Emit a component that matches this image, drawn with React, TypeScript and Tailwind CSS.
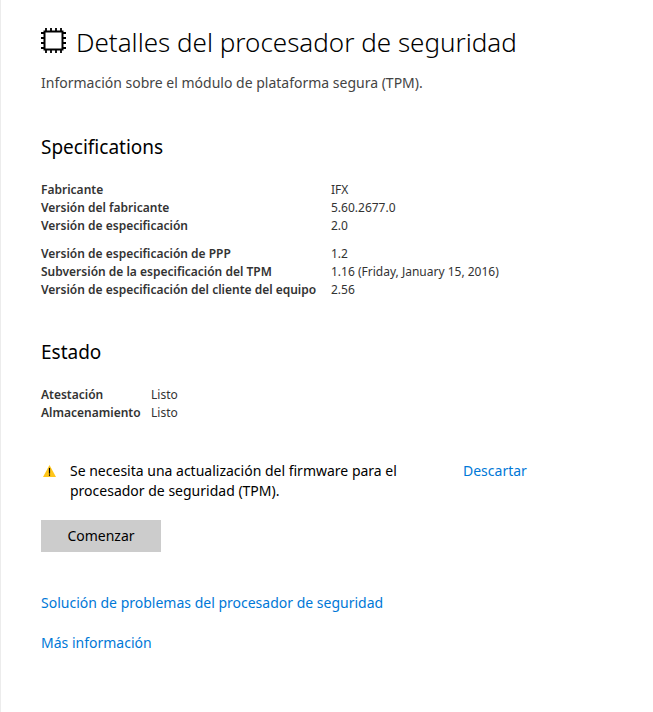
type Row = { label: string; value: string }

const manufacturerRows: Row[] = [
  { label: 'Fabricante', value: 'IFX' },
  { label: 'Versión del fabricante', value: '5.60.2677.0' },
  { label: 'Versión de especificación', value: '2.0' },
]

const specificationRows: Row[] = [
  { label: 'Versión de especificación de PPP', value: '1.2' },
  { label: 'Subversión de la especificación del TPM', value: '1.16 (Friday, January 15, 2016)' },
  { label: 'Versión de especificación del cliente del equipo', value: '2.56' },
]

const statusRows: Row[] = [
  { label: 'Atestación', value: 'Listo' },
  { label: 'Almacenamiento', value: 'Listo' },
]

function ChipIcon() {
  return (
    <svg className="mb-[3px] size-[25px] shrink-0" viewBox="0 0 25 25" fill="none" stroke="#000" aria-hidden="true">
      <rect x="3.5" y="3.5" width="18" height="18" strokeWidth="2" />
      <path
        d="M5 0v3M10 0v3M15 0v3M20 0v3M5 22v3M10 22v3M15 22v3M20 22v3M0 5h3M0 10h3M0 15h3M0 20h3M22 5h3M22 10h3M22 15h3M22 20h3"
        strokeWidth="1.8"
      />
    </svg>
  )
}

function WarningIcon() {
  return (
    <svg className="mt-1 h-3 w-[13px] shrink-0" viewBox="0 0 13 12" aria-hidden="true">
      <path d="M6.5 0L13 12H0z" fill="#ffc61a" />
      <path d="M6 3h1v5.5H6zM6 9.5h1v1.2H6z" fill="#000" stroke="#000" strokeWidth="0.2" />
    </svg>
  )
}

function Rows({ rows }: { rows: Row[] }) {
  return (
    <tbody>
      {rows.map((row) => (
        <tr key={row.label}>
          <th scope="row" className="p-0 text-left font-semibold">{row.label}</th>
          <td className="p-0">{row.value}</td>
        </tr>
      ))}
    </tbody>
  )
}

export default function App() {
  return (
    <main className="min-h-screen border-l border-[#ececec] bg-white px-10 pt-6 pb-12 font-['Noto_Sans','Open_Sans',sans-serif] text-sm leading-5 text-black">
      <header>
        <div className="flex items-center gap-2.5">
          <ChipIcon />
          <h1 className="text-[26px] leading-9 font-light">Detalles del procesador de seguridad</h1>
        </div>
        <p className="mt-[13px] text-[#444]">Información sobre el módulo de plataforma segura (TPM).</p>
      </header>

      <section className="mt-10">
        <h2 className="text-[19px] leading-7">Specifications</h2>
        <table className="mt-5 w-full table-fixed text-xs leading-[18px] text-[#333]">
          <colgroup>
            <col className="w-[290px]" />
            <col />
          </colgroup>
          <Rows rows={manufacturerRows} />
          <tbody aria-hidden="true">
            <tr className="h-[10px]" />
          </tbody>
          <Rows rows={specificationRows} />
        </table>
      </section>

      <section className="mt-[39px]">
        <h2 className="text-[19px] leading-7">Estado</h2>
        <table className="mt-5 w-full table-fixed text-xs leading-[18px] text-[#333]">
          <colgroup>
            <col className="w-[110px]" />
            <col />
          </colgroup>
          <Rows rows={statusRows} />
        </table>

        <div className="mt-[39px] flex items-start">
          <div className="flex w-[422px] gap-3.5 pl-0.5">
            <WarningIcon />
            <p className="max-w-[340px]">Se necesita una actualización del firmware para el procesador de seguridad (TPM).</p>
          </div>
          <a href="#descartar" className="text-[#0078d7]">Descartar</a>
        </div>
        <button type="button" className="mt-[19px] h-8 w-[120px] bg-[#ccc]">Comenzar</button>
      </section>

      <nav className="mt-[41px] flex flex-col items-start gap-5 text-[#0078d7]">
        <a href="#solucion">Solución de problemas del procesador de seguridad</a>
        <a href="#informacion">Más información</a>
      </nav>
    </main>
  )
}
